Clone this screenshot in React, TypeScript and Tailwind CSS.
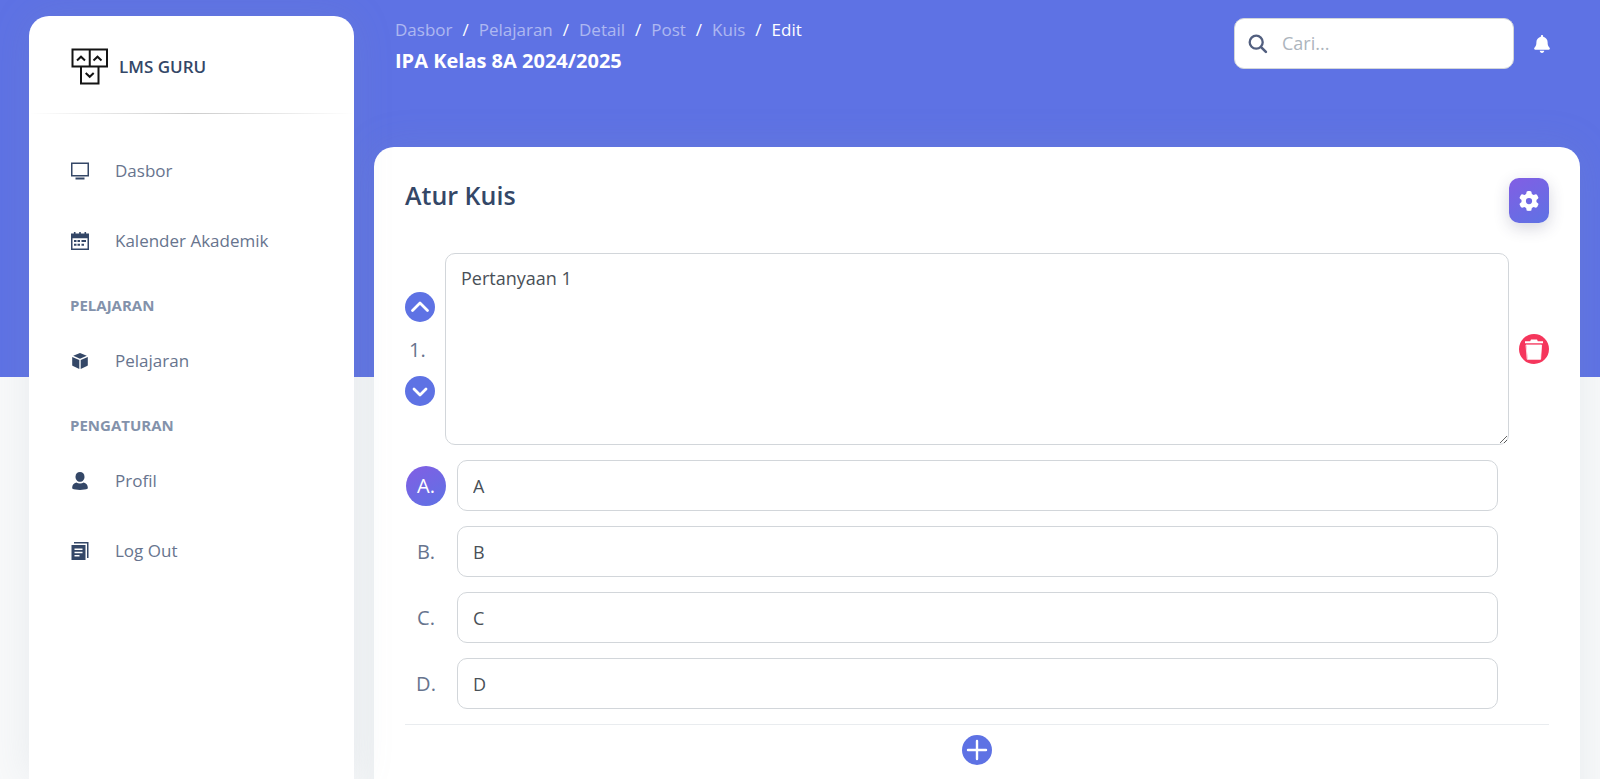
import { useState } from "react";
import type { ReactNode } from "react";
import { FaBell, FaGear } from "react-icons/fa6";

const crumbs = ["Dasbor", "Pelajaran", "Detail", "Post", "Kuis"];

const optionLabels = ["A", "B", "C", "D"];

function LogoIcon() {
  return (
    <svg viewBox="0 0 38 38" className="w-[38px] h-[38px] shrink-0" fill="none" stroke="#141414">
      <path strokeWidth="2" d="M1.500 1.500h34.500v17H1.500zM18.750 1.500v17M10 18.500h17.500v17H10z" />
      <path strokeWidth="2" d="M6 12.500l4-3.800 4 3.800M22.500 12.500l4-3.800 4 3.800M14.700 25l4 3.800 4-3.800" />
    </svg>
  );
}

function MonitorIcon() {
  return (
    <svg viewBox="0 0 18 18" className="w-[18px] h-[18px]" fill="none" stroke="#344767">
      <path strokeWidth="1.500" d="M.75 1.250h16.500v12.500H.75z" />
      <path strokeWidth="2" d="M4.500 16.500h9" />
    </svg>
  );
}

function CalendarIcon() {
  return (
    <svg viewBox="0 0 18 18" className="w-[18px] h-[18px]" fill="#344767">
      <path
        fillRule="evenodd"
        d="M0 1.500h2.900V0h1.600v1.500h3.700V0h1.600v1.500h3.700V0h1.600v1.500H18V18H0zM1.500 6.200v10.300h15V6.200z"
      />
      <path d="M6.500 7.900H9v2H6.500zM10.500 7.900H15v2h-4.500zM3 7.900h2.500v2H3zM3 11.800h2.500v2H3zM6.500 11.800H9v2H6.500zM10.500 11.800H13v2h-2.500z" />
    </svg>
  );
}

function BoxIcon() {
  return (
    <svg viewBox="0 0 18 18" className="w-[18px] h-[18px]" fill="#344767">
      <path d="M9 1l6.800 2.800L9 6.700 2.200 3.800zM1.200 5l7.100 3v9l-6.300-2.900a1.300 1.300 0 0 1-.8-1.200zM16.800 5l-7.100 3v9l6.300-2.900a1.300 1.300 0 0 0 .8-1.200z" />
    </svg>
  );
}

function UserIcon() {
  return (
    <svg viewBox="0 0 18 18" className="w-[18px] h-[18px]" fill="#344767">
      <path d="M9 0c2.700 0 4.500 2.100 4.500 4.700S11.700 9.800 9 9.800 4.500 7.300 4.500 4.700 6.300 0 9 0z" />
      <path d="M5.300 10.600c1.100.7 2.300 1 3.700 1s2.600-.3 3.700-1c2.400.7 4.100 2.600 4.100 4.800v1.200C15 17.600 12 18 9 18s-6-.4-7.800-1.400v-1.200c0-2.200 1.700-4.100 4.100-4.800z" />
    </svg>
  );
}

function PapersIcon() {
  return (
    <svg viewBox="0 0 18 18" className="w-[18px] h-[18px]" fill="#344767">
      <path d="M3 0h14.500v16H16V1.500H3z" />
      <path fillRule="evenodd" d="M.5 3h14v15H.5zM3.500 6.500V8h8V6.500zM3.500 9.700v1.500h8V9.700zM3.500 12.900v1.500h5v-1.500z" />
    </svg>
  );
}

function SearchIcon() {
  return (
    <svg viewBox="0 0 20 20" className="w-[20px] h-[20px]" fill="none" stroke="#525f7f" strokeLinecap="round">
      <circle cx="8.200" cy="8.200" r="6.500" strokeWidth="2.300" />
      <path strokeWidth="2.600" d="M13.300 13.300l4.600 4.600" />
    </svg>
  );
}

function NavItem({ label, icon }: { label: string; icon: ReactNode }) {
  return (
    <li>
      <a href="#" className="flex h-[50px] items-center gap-[26px] pl-[42px] text-[17px] text-[#67748e]">
        {icon}
        {label}
      </a>
    </li>
  );
}

function RoundButton({ label, children, danger = false }: { label: string; children: ReactNode; danger?: boolean }) {
  return (
    <button
      type="button"
      aria-label={label}
      className={`flex size-[30px] shrink-0 items-center justify-center rounded-full ${
        danger ? "bg-[#f5365c]" : "bg-[#5e72e4]"
      }`}
    >
      <svg
        viewBox="0 0 30 30"
        className="size-[30px]"
        fill="none"
        stroke="#fff"
        strokeWidth="2.800"
        strokeLinecap="round"
        strokeLinejoin="round"
      >
        {children}
      </svg>
    </button>
  );
}

export default function App() {
  const [question, setQuestion] = useState("Pertanyaan 1");
  const [options, setOptions] = useState(["A", "B", "C", "D"]);
  const [correct, setCorrect] = useState(0);

  const updateOption = (index: number, value: string) => {
    setOptions(options.map((option, i) => (i === index ? value : option)));
  };

  return (
    <div className="flex h-screen overflow-hidden bg-[linear-gradient(#5e72e4_377px,#f8f9fa_377px)] pl-[29px] font-['Open_Sans',sans-serif]">
      {/* Sidebar */}
      <aside className="z-10 mt-4 w-[325px] shrink-0 rounded-t-[20px] bg-white shadow-[0_0_40px_0_rgba(136,152,170,0.15)]">
        <a href="#" className="flex h-[97px] items-center gap-[10px] pt-1 pl-[42px] text-[17px] font-semibold text-[#344767]">
          <LogoIcon />
          LMS GURU
        </a>
        <div className="h-px bg-linear-to-r from-transparent via-black/20 to-transparent" />
        <nav className="pt-8">
          <ul className="flex flex-col gap-5">
            <NavItem label="Dasbor" icon={<MonitorIcon />} />
            <NavItem label="Kalender Akademik" icon={<CalendarIcon />} />
          </ul>
          <h6 className="pt-[27px] pb-[19px] pl-[41px] text-[15px] leading-6 font-bold text-[#8392ab]">PELAJARAN</h6>
          <ul>
            <NavItem label="Pelajaran" icon={<BoxIcon />} />
          </ul>
          <h6 className="pt-[27px] pb-[19px] pl-[41px] text-[15px] leading-6 font-bold text-[#8392ab]">PENGATURAN</h6>
          <ul className="flex flex-col gap-5">
            <NavItem label="Profil" icon={<UserIcon />} />
            <NavItem label="Log Out" icon={<PapersIcon />} />
          </ul>
        </nav>
      </aside>

      <main className="min-w-0 flex-1 pr-5 pl-5">
        {/* Top bar */}
        <header className="flex h-[147px] justify-between pt-[18px] pr-[29px] pl-[21px] text-white">
          <div>
            <nav aria-label="breadcrumb">
              <ol className="flex text-[17px] leading-6">
                {crumbs.map((crumb) => (
                  <li key={crumb} className="flex">
                    <a href="#" className="text-white/50">
                      {crumb}
                    </a>
                    <span className="px-[10px]">/</span>
                  </li>
                ))}
                <li>Edit</li>
              </ol>
            </nav>
            <h1 className="mt-1 text-[20px] leading-[30px] font-bold">IPA Kelas 8A 2024/2025</h1>
          </div>
          <div className="flex h-[51px] items-center gap-[19px]">
            <label className="flex h-full w-[280px] items-center gap-[14px] rounded-[10px] border border-[#d2d6da] bg-white pl-[13px]">
              <SearchIcon />
              <input
                type="text"
                aria-label="Cari"
                placeholder="Cari..."
                className="min-w-0 flex-1 text-[18px] text-[#495057] outline-none placeholder:text-[#adb5bd]"
              />
            </label>
            <button type="button" aria-label="Notifikasi">
              <FaBell className="size-[18px]" />
            </button>
          </div>
        </header>

        {/* Quiz card */}
        <section className="min-h-[700px] rounded-[20px] bg-white p-[31px] shadow-[0_0_40px_0_rgba(136,152,170,0.15)]">
          <div className="flex justify-between">
            <h2 className="text-[25px] leading-[34px] font-semibold text-[#344767]">Atur Kuis</h2>
            <button
              type="button"
              aria-label="Pengaturan kuis"
              className="flex h-[45px] w-[40px] items-center justify-center rounded-[10px] bg-linear-[150deg] from-[#825ee4] to-[#5e72e4] text-white shadow-[0_5px_16px_rgba(50,50,93,0.2)]"
            >
              <FaGear className="size-[20px]" />
            </button>
          </div>

          <div className="mt-[30px] flex items-center gap-[10px]">
            <div className="flex flex-col">
              <RoundButton label="Pindah ke atas">
                <path d="M7.500 18.500l7.500-7.500 7.500 7.500" />
              </RoundButton>
              <span className="pt-[14px] pb-3 pl-1 text-[20px] leading-7 text-[#67748e]">1.</span>
              <RoundButton label="Pindah ke bawah">
                <path d="M9 13l6 6 6-6" />
              </RoundButton>
            </div>
            <textarea
              aria-label="Pertanyaan"
              value={question}
              onChange={(e) => setQuestion(e.target.value)}
              className="h-[192px] min-w-0 flex-1 resize rounded-[10px] border border-[#d2d6da] bg-white px-[15px] py-[10px] text-[18px] leading-7 text-[#495057] outline-none"
            />
            <RoundButton label="Hapus pertanyaan" danger>
              <path fill="#fff" stroke="none" d="M6 7.200h5.200L12 5.400h6l.8 1.800H24v2H6z" />
              <path fill="#fff" strokeWidth="0.8" d="M7.400 11h15.200L21.600 25.300H8.600z" />
            </RoundButton>
          </div>

          <ul className="mt-[15px] flex flex-col gap-[15px] pr-[51px]">
            {options.map((option, index) => (
              <li key={optionLabels[index]} className="flex items-center gap-[11px] pl-px">
                <button
                  type="button"
                  aria-pressed={index === correct}
                  onClick={() => setCorrect(index)}
                  className={`size-[40px] shrink-0 rounded-full text-[20px] ${
                    index === correct
                      ? "bg-linear-[150deg] from-[#825ee4] to-[#5e72e4] text-white"
                      : "text-[#67748e]"
                  }`}
                >
                  {optionLabels[index]}.
                </button>
                <input
                  type="text"
                  aria-label={`Jawaban ${optionLabels[index]}`}
                  value={option}
                  onChange={(e) => updateOption(index, e.target.value)}
                  className="h-[51px] min-w-0 flex-1 rounded-[10px] border border-[#d2d6da] bg-white px-[15px] text-[18px] text-[#495057] outline-none"
                />
              </li>
            ))}
          </ul>

          <div className="mt-[15px] flex justify-center border-t border-[#e9ecef] pt-[10px]">
            <RoundButton label="Tambah pertanyaan">
              <path strokeWidth="2.400" d="M15 6v18M6 15h18" />
            </RoundButton>
          </div>
        </section>
      </main>
    </div>
  );
}
